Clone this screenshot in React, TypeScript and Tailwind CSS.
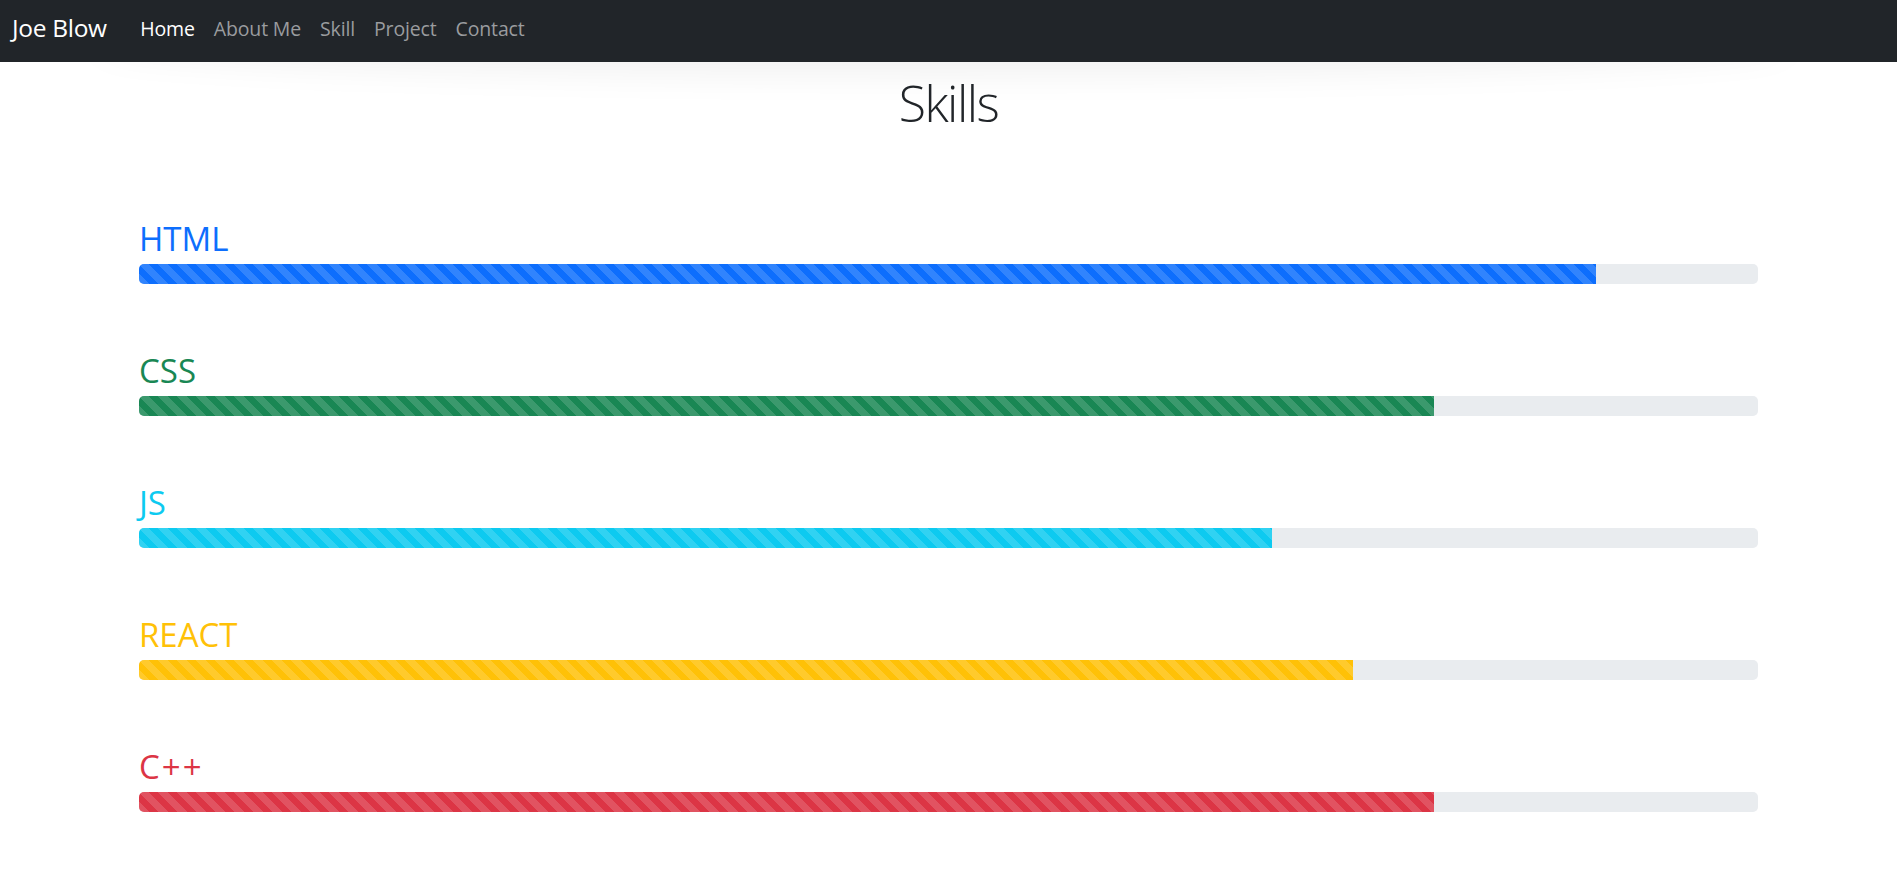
import React from 'react';

interface Skill {
  name: string;
  percent: number;
  text: string;
  bar: string;
}

const skills: Skill[] = [
  { name: 'HTML', percent: 90, text: 'text-[#0d6efd]', bar: 'bg-[#0d6efd]' },
  { name: 'CSS', percent: 80, text: 'text-[#198754]', bar: 'bg-[#198754]' },
  { name: 'JS', percent: 70, text: 'text-[#0dcaf0]', bar: 'bg-[#0dcaf0]' },
  { name: 'REACT', percent: 75, text: 'text-[#ffc107]', bar: 'bg-[#ffc107]' },
  { name: 'C++', percent: 80, text: 'text-[#dc3545] tracking-[2px]', bar: 'bg-[#dc3545]' },
];

const navLinks = ['Home', 'About Me', 'Skill', 'Project', 'Contact'];

const stripes =
  'bg-[linear-gradient(45deg,rgba(255,255,255,0.15)_25%,transparent_25%,transparent_50%,rgba(255,255,255,0.15)_50%,rgba(255,255,255,0.15)_75%,transparent_75%,transparent)] bg-[length:19px_19px]';

const App: React.FC = () => {
  return (
    <div className="relative min-h-screen bg-white font-['Open_Sans',sans-serif]">
      {/* soft shadow under the navbar */}
      <div className="absolute left-[90px] right-[100px] top-0 h-[62px] rounded-[50%] shadow-[0_12px_36px_rgba(0,0,0,0.06)]" />

      {/* Navbar */}
      <nav className="relative z-10 h-[62px] bg-[#212529] flex items-center pl-[12px] pb-[5px]">
        <span className="text-white text-[24.5px] tracking-[-0.3px] mr-[24px]">Joe Blow</span>
        <ul className="flex items-center">
          {navLinks.map((link, index) => (
            <li
              key={link}
              className={`px-[9.5px] text-[19.5px] tracking-[-0.15px] ${index === 0 ? 'text-white' : 'text-[#9a9c9f]'}`}
            >
              {link}
            </li>
          ))}
        </ul>
      </nav>

      {/* Skills */}
      <div className="relative w-[1619px] mx-auto">
        <h1 className="mt-[9px] text-center text-[50px] font-light leading-[64px] text-[#212529] tracking-[-1.5px]">Skills</h1>

        <div className="flex flex-col gap-[67px] mt-[84px]">
          {skills.map((skill) => (
            <div key={skill.name}>
              <h3 className={`text-[33px] leading-[40px] font-normal mb-[5px] ${skill.text}`}>{skill.name}</h3>
              <div className="h-[20px] w-full bg-[#e9ecef] rounded-[5px] overflow-hidden flex">
                <div className={`h-full ${skill.bar} ${stripes}`} style={{ width: `${skill.percent}%` }} />
              </div>
            </div>
          ))}
        </div>
      </div>
    </div>
  );
};

export default App;
